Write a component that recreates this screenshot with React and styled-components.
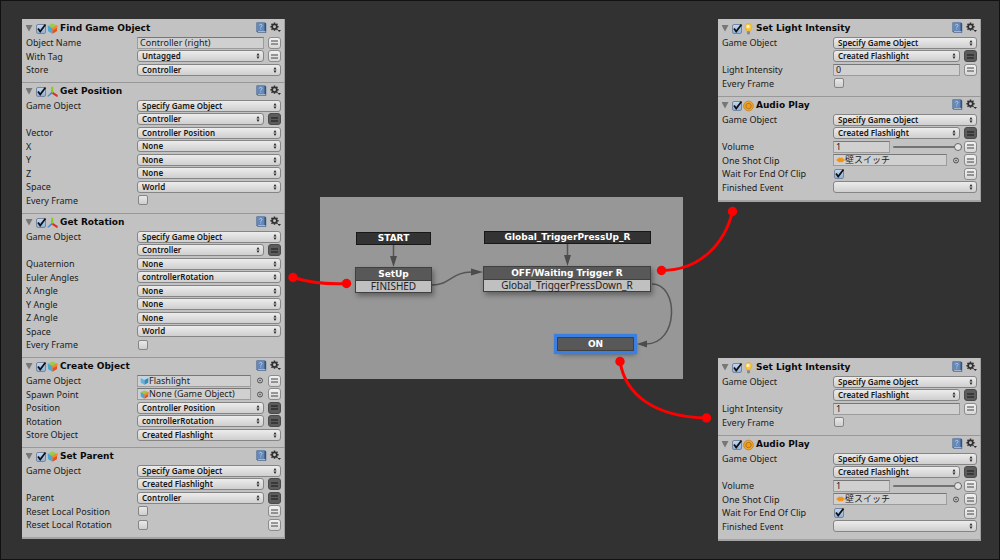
import { useId } from "react";
import styled, { createGlobalStyle } from "styled-components";

const GlobalStyle = createGlobalStyle`
  * {
    box-sizing: border-box;
  }

  body {
    margin: 0;
    background: #323232;
    color: #1c1c1c;
    font-family: "Noto Sans", "Noto Sans CJK JP", sans-serif;
    font-size: 9px;
    line-height: 12px;
  }
`;

const Page = styled.main`
  position: relative;
  display: grid;
  grid-template-columns: 263fr 363fr 263fr;
  gap: 35px;
  min-height: 100vh;
  padding: 18px 18px 18px 21px;
  border: 1px solid #111;
`;

const Column = styled.div`
  display: flex;
  flex-direction: column;
  justify-content: space-between;
  align-items: stretch;
  min-width: 0;
`;

const Panel = styled.section`
  background: #c2c2c2;
  border-bottom: 2px solid #a3a3a3;
  box-shadow: inset -1px 0 #a0a0a0;
`;

const ActionBlock = styled.article`
  padding: 0 4px 6px;

  & + & {
    box-shadow: inset 0 1px #989898, inset -1px 0 #a0a0a0;
  }
`;

const ActionHeader = styled.header`
  display: flex;
  align-items: center;
  height: 17px;
  padding: 2px 0 0;
`;

const Foldout = styled.button`
  width: 8px;
  height: 8px;
  margin: 0 2px 1px 0;
  padding: 0;
  border: 0;
  background: none;
  display: flex;
`;

const ActionTitle = styled.h2`
  flex: 1;
  margin: 0 0 0 2px;
  font-family: "DejaVu Sans", sans-serif;
  font-size: 9px;
  line-height: 13px;
  font-weight: 700;
  color: #0a0a0a;
  white-space: nowrap;
`;

const IconButton = styled.button`
  width: 11px;
  height: 11px;
  margin: 0 0 3px 3px;
  padding: 0;
  border: 0;
  background: none;
  display: flex;
`;

const HeaderIcon = styled.span`
  display: flex;
  width: 11px;
  height: 12px;
  margin-left: 1px;
`;

const RowList = styled.div`
  display: flex;
  flex-direction: column;
`;

const Row = styled.div`
  display: flex;
  align-items: center;
  gap: 4px;
  height: 13px;

  &:nth-child(even) {
    height: 14px;
  }
`;

const RowLabel = styled.label`
  flex: 0 0 107px;
  padding-top: 1px;
  white-space: nowrap;
`;

const PopupWrap = styled.span`
  position: relative;
  flex: 1;
  display: flex;
  min-width: 0;
`;

const Popup = styled.select`
  appearance: none;
  width: 100%;
  height: 12px;
  padding: 0 12px 0 4px;
  border: 1px solid #858585;
  border-radius: 3px;
  background: linear-gradient(#ececec, #cfcfcf);
  color: #161616;
  font-family: inherit;
  font-size: 8px;
  font-weight: 600;
  line-height: 10px;
`;

const PopupArrows = styled.svg`
  position: absolute;
  top: 3px;
  right: 4px;
  pointer-events: none;
`;

const FieldBox = styled.span`
  flex: ${({ $narrow }) => ($narrow ? "0 0 57px" : "1")};
  display: flex;
  align-items: center;
  min-width: 0;
  height: 12px;
  padding-left: 2px;
  background: #d0d0d0;
  border: 1px solid #9c9c9c;
  border-top-color: #777;
`;

const FieldInput = styled.input`
  flex: 1;
  min-width: 0;
  height: 10px;
  padding: 0;
  border: 0;
  outline: 0;
  background: none;
  color: inherit;
  font: inherit;
  line-height: 10px;
`;

const PickerButton = styled.button`
  width: 9px;
  height: 9px;
  padding: 0;
  border: 0;
  background: none;
  display: flex;
`;

const VariableToggle = styled.button`
  flex: 0 0 13px;
  display: flex;
  align-items: center;
  justify-content: center;
  height: 12px;
  padding: 0;
  border: 1px solid ${({ $on }) => ($on ? "#4a4a4a" : "#8c8c8c")};
  border-radius: 3px;
  background: ${({ $on }) =>
    $on ? "#5c5c5c" : "linear-gradient(#f2f2f2, #d6d6d6)"};
  color: ${({ $on }) => ($on ? "#161616" : "#444")};
`;

const Spacer = styled.span`
  flex: 1;
`;

const TickWrap = styled.span`
  position: relative;
  display: flex;
  margin-left: ${({ $inset }) => ($inset ? "1px" : "0")};
`;

const Tick = styled.input`
  appearance: none;
  width: 10px;
  height: 10px;
  margin: 0;
  border: 1px solid #858585;
  border-radius: 2px;
  background: linear-gradient(#e8e8e8, #cecece);

  &:checked {
    border-color: #7686a0;
    background: linear-gradient(#c0d6f0, #8fb2dc);
  }
`;

const TickMark = styled.svg`
  position: absolute;
  top: -1px;
  left: 0;
  pointer-events: none;
  opacity: 0;

  ${Tick}:checked + & {
    opacity: 1;
  }
`;

const Slider = styled.input`
  appearance: none;
  flex: 1;
  min-width: 0;
  height: 12px;
  margin: 0 -2px 0 -1px;
  background: none;

  &::-webkit-slider-runnable-track {
    height: 2px;
    background: #737373;
    border-radius: 1px;
  }

  &::-webkit-slider-thumb {
    appearance: none;
    width: 8px;
    height: 8px;
    margin-top: -3px;
    border: 1px solid #666;
    border-radius: 50%;
    background: #e4e4e4;
  }
`;

const Graph = styled.section`
  position: relative;
  align-self: start;
  min-height: 182px;
  margin-top: 178px;
  background: #979797;
`;

const Transitions = styled.svg`
  position: absolute;
  top: 0;
  left: 0;
  overflow: visible;
`;

const Node = styled.div`
  position: absolute;
  left: ${({ $x }) => $x}px;
  top: ${({ $y }) => $y}px;
  width: ${({ $w }) => $w}px;
  border: 1px solid ${({ $kind }) => ($kind === "event" ? "#181818" : "#404040")};
  background: ${({ $kind }) => ($kind === "event" ? "#333" : "#585858")};
  color: #fff;
  font-family: "DejaVu Sans", sans-serif;
  font-size: 9px;
  line-height: ${({ $kind }) => ($kind === "event" ? 11 : 12)}px;
  font-weight: 700;
  text-align: center;
  white-space: nowrap;
  box-shadow: ${({ $kind }) =>
    ({
      event: "none",
      state: "2px 3px 5px rgba(0, 0, 0, 0.35)",
      active: "0 0 0 2px #3b7fe0, 0 0 1px 3px #3b7fe0, 2px 4px 5px rgba(0, 0, 0, 0.35)",
    })[$kind]};
`;

const NodeEvent = styled.div`
  border-top: 1px solid #404040;
  background: #c0c0c0;
  color: #222;
  font-family: "Noto Sans", sans-serif;
  font-size: 10px;
  font-weight: 400;
  line-height: 11px;
`;

const Wires = styled.svg`
  position: absolute;
  top: -1px;
  left: -1px;
  width: calc(100% + 2px);
  height: calc(100% + 2px);
  pointer-events: none;
`;

const CubeIcon = ({ size = 11, plain }) => (
  <svg width={size} height={size} viewBox="0 0 12 12">
    <path d="M6 0.500 11.300 2.800 6 5.400 0.700 2.800Z" fill={plain ? "#a9dcf5" : "#9ccb4a"} />
    <path d="M0.700 2.800 6 5.400V11.700L1.200 9Z" fill={plain ? "#5fb4e2" : "#4ba8d0"} />
    <path d="M11.300 2.800 6 5.400V11.700L10.800 9Z" fill={plain ? "#3688bd" : "#e8501e"} />
    {!plain && <path d="M6 5.400 11.300 2.800 11 5.500 6 8Z" fill="#f58a2c" />}
  </svg>
);

const AxesIcon = () => (
  <svg width="11" height="12" viewBox="0 0 11 12">
    <path d="M4.300 0.800H6.200L6.400 7 5 7.800 4 7Z" fill="#86c826" />
    <path d="M4.300 6 5.500 7.500 1.200 10.800 0.200 10.200Z" fill="#3c8fd6" />
    <path d="M6 6 10.800 9 10.300 11.200 5 7.800Z" fill="#de2f22" />
  </svg>
);

const BulbIcon = () => (
  <svg width="11" height="12" viewBox="0 0 11 12">
    <path
      d="M5.500 0.500C3.300 0.500 2 2.100 2 4c0 1.700 1.500 2.400 1.700 4h3.600C7.500 6.400 9 5.700 9 4 9 2.100 7.700 0.500 5.500 0.500Z"
      fill="#f9c63a"
      stroke="#dba02c"
      strokeWidth="0.500"
    />
    <circle cx="5" cy="3.500" r="1.700" fill="#fff3b8" />
    <path d="M4 8.300h3v2.200L6.200 11.500H4.800L4 10.500Z" fill="#8a8a8a" />
  </svg>
);

const SpeakerIcon = () => (
  <svg width="12" height="12" viewBox="0 0 12 12">
    <circle cx="6" cy="6" r="5.300" fill="#f5a623" stroke="#b97a28" strokeWidth="0.800" />
    <circle cx="6" cy="6" r="3" fill="#f79a0c" stroke="#8f7049" strokeWidth="0.900" />
  </svg>
);

const ClipIcon = () => (
  <svg width="9" height="8" viewBox="0 0 9 8">
    <path d="M0 4 2 2.500 3 1.500 4.500 2 6 1.500 7 2.500 9 4 7 5.500 6 6.500 4.500 6 3 6.500 2 5.500Z" fill="#f39314" />
  </svg>
);

const HelpIcon = () => (
  <svg width="11" height="11" viewBox="0 0 11 11">
    <path d="M0.500 0.500h8.500l1.200 1v9.200H1.700L0.500 9.500Z" fill="#34527c" />
    <path d="M0.800 0.500h7.700v8.500H0.800Z" fill="#6489b8" />
    <path d="M1.700 9.700h7.800" stroke="#d4dae4" strokeWidth="0.900" />
    <path
      d="M3.300 3.500C3.400 2 6 2 6 3.500 6 4.400 4.700 4.500 4.700 5.700M4.700 6.600V7.500"
      fill="none"
      stroke="#bcd2ec"
      strokeWidth="0.900"
    />
  </svg>
);

const GearIcon = () => (
  <svg width="11" height="11" viewBox="0 0 11 11">
    <circle cx="4.500" cy="4.700" r="2.300" fill="none" stroke="#303030" strokeWidth="1.700" />
    <path
      d="M4.500 0.600V2.500M4.500 7V8.800M0.400 4.700H2M7 4.700H8.600M1.500 1.700 2.700 2.900M6.300 6.500 7.500 7.700M7.500 1.700 6.300 2.900M2.700 6.500 1.500 7.700"
      stroke="#303030"
      strokeWidth="1.500"
    />
    <path d="M7.500 8h3.500L9.200 10Z" fill="#2c2c2c" />
  </svg>
);

const icons = {
  cube: <CubeIcon />,
  axes: <AxesIcon />,
  bulb: <BulbIcon />,
  speaker: <SpeakerIcon />,
};

const Checkbox = ({ inset, ...props }) => (
  <TickWrap $inset={inset}>
    <Tick type="checkbox" {...props} />
    <TickMark width="11" height="11" viewBox="0 0 11 11">
      <path d="M2 5.500 4.200 8.500 9.500 1.500" fill="none" stroke="#111" strokeWidth="1.800" />
    </TickMark>
  </TickWrap>
);

const Select = ({ value, ...props }) => (
  <PopupWrap>
    <Popup defaultValue={value} {...props}>
      <option value={value}>{value}</option>
    </Popup>
    <PopupArrows width="4" height="6" viewBox="0 0 4 6" fill="#2a2a2a">
      <path d="M2 0 3.500 2.500H0.500ZM2 6 0.500 3.500H3.500Z" />
    </PopupArrows>
  </PopupWrap>
);

const objectIcons = {
  prefab: <CubeIcon size={9} plain />,
  object: <CubeIcon size={9} />,
  clip: <ClipIcon />,
};

const Property = ({ label, owner, type = "popup", value, icon, toggle }) => {
  const id = useId();
  const a11y = label ? { id } : { id, "aria-label": owner };

  return (
    <Row>
      <RowLabel htmlFor={id}>{label}</RowLabel>
      {type === "popup" && <Select value={value} {...a11y} />}
      {type === "text" && (
        <FieldBox>
          <FieldInput defaultValue={value} {...a11y} />
        </FieldBox>
      )}
      {type === "object" && (
        <>
          <FieldBox>
            {objectIcons[icon]}
            <FieldInput defaultValue={value} {...a11y} />
          </FieldBox>
          <PickerButton type="button" aria-label={`Pick ${label}`}>
            <svg width="9" height="9" viewBox="0 0 9 9">
              <circle cx="5" cy="4.500" r="2.500" fill="none" stroke="#444" strokeWidth="0.900" />
              <circle cx="5" cy="4.500" r="0.800" fill="#444" />
            </svg>
          </PickerButton>
        </>
      )}
      {type === "slider" && (
        <>
          <FieldBox $narrow>
            <FieldInput defaultValue={value} {...a11y} />
          </FieldBox>
          <Slider type="range" min="0" max="1" step="0.01" defaultValue={value} aria-label={label} />
        </>
      )}
      {type === "check" && (
        <>
          <Checkbox inset defaultChecked={value} {...a11y} />
          <Spacer />
        </>
      )}
      {toggle && (
        <VariableToggle type="button" $on={toggle === "on"} aria-label={`Use variable for ${label || owner}`}>
          <svg width="7" height="5" viewBox="0 0 7 5">
            <path d="M0 1H7M0 4H7" stroke="currentColor" />
          </svg>
        </VariableToggle>
      )}
    </Row>
  );
};

const Action = ({ title, icon, rows }) => (
  <ActionBlock>
    <ActionHeader>
      <Foldout type="button" aria-label={`Collapse ${title}`}>
        <svg width="8" height="8" viewBox="0 0 8 8">
          <path d="M-1 1H6L2.500 7.500Z" fill="#777" transform="translate(0.500 0)" />
        </svg>
      </Foldout>
      <Checkbox defaultChecked aria-label={`Enable ${title}`} />
      <HeaderIcon>{icons[icon]}</HeaderIcon>
      <ActionTitle>{title}</ActionTitle>
      <IconButton type="button" aria-label="Help">
        <HelpIcon />
      </IconButton>
      <IconButton type="button" aria-label="Settings">
        <GearIcon />
      </IconButton>
    </ActionHeader>
    <RowList>
      {rows.map((row, index) => (
        <Property key={index} {...row} />
      ))}
    </RowList>
  </ActionBlock>
);

const gameObject = (name) => [
  { label: "Game Object", value: "Specify Game Object" },
  { owner: "Specified object", value: name, toggle: "on" },
];

const setupActions = [
  {
    title: "Find Game Object",
    icon: "cube",
    rows: [
      { label: "Object Name", type: "text", value: "Controller (right)", toggle: "off" },
      { label: "With Tag", value: "Untagged", toggle: "off" },
      { label: "Store", value: "Controller" },
    ],
  },
  {
    title: "Get Position",
    icon: "axes",
    rows: [
      ...gameObject("Controller"),
      { label: "Vector", value: "Controller Position" },
      { label: "X", value: "None" },
      { label: "Y", value: "None" },
      { label: "Z", value: "None" },
      { label: "Space", value: "World" },
      { label: "Every Frame", type: "check", value: false },
    ],
  },
  {
    title: "Get Rotation",
    icon: "axes",
    rows: [
      ...gameObject("Controller"),
      { label: "Quaternion", value: "None" },
      { label: "Euler Angles", value: "controllerRotation" },
      { label: "X Angle", value: "None" },
      { label: "Y Angle", value: "None" },
      { label: "Z Angle", value: "None" },
      { label: "Space", value: "World" },
      { label: "Every Frame", type: "check", value: false },
    ],
  },
  {
    title: "Create Object",
    icon: "cube",
    rows: [
      { label: "Game Object", type: "object", icon: "prefab", value: "Flashlight", toggle: "off" },
      { label: "Spawn Point", type: "object", icon: "object", value: "None (Game Object)", toggle: "off" },
      { label: "Position", value: "Controller Position", toggle: "on" },
      { label: "Rotation", value: "controllerRotation", toggle: "on" },
      { label: "Store Object", value: "Created Flashlight" },
    ],
  },
  {
    title: "Set Parent",
    icon: "cube",
    rows: [
      ...gameObject("Created Flashlight"),
      { label: "Parent", value: "Controller", toggle: "on" },
      { label: "Reset Local Position", type: "check", value: false, toggle: "off" },
      { label: "Reset Local Rotation", type: "check", value: false, toggle: "off" },
    ],
  },
];

const lightActions = (intensity) => [
  {
    title: "Set Light Intensity",
    icon: "bulb",
    rows: [
      ...gameObject("Created Flashlight"),
      { label: "Light Intensity", type: "text", value: intensity, toggle: "off" },
      { label: "Every Frame", type: "check", value: false },
    ],
  },
  {
    title: "Audio Play",
    icon: "speaker",
    rows: [
      ...gameObject("Created Flashlight"),
      { label: "Volume", type: "slider", value: "1", toggle: "off" },
      { label: "One Shot Clip", type: "object", icon: "clip", value: "壁スイッチ", toggle: "off" },
      { label: "Wait For End Of Clip", type: "check", value: true, toggle: "off" },
      { label: "Finished Event", value: "" },
    ],
  },
];

const ActionPanel = ({ label, actions }) => (
  <Panel aria-label={label}>
    {actions.map((action) => (
      <Action key={action.title} {...action} />
    ))}
  </Panel>
);

export default function App() {
  return (
    <>
      <GlobalStyle />
      <Page>
        <Column>
          <ActionPanel label="SetUp actions" actions={setupActions} />
        </Column>

        <Graph aria-label="State graph">
          <Transitions width="363" height="182" fill="none" stroke="#555" strokeWidth="1.500">
            <path d="M73.500 47V60M247.500 46V59" />
            <path d="M112 88C131 88 131 75 152 75" />
            <path d="M332 87C359 87 359 147 326 147" />
            <g fill="#4c4c4c" stroke="none">
              <path d="M70 59H77L73.500 70ZM244 58H251L247.500 69Z" />
              <path d="M151 71.500V78.500L163 75ZM327 143.500V150.500L317 147Z" />
            </g>
          </Transitions>
          <Node $kind="event" $x={36} $y={35} $w={75}>START</Node>
          <Node $kind="state" $x={35} $y={70} $w={77}>
            SetUp
            <NodeEvent>FINISHED</NodeEvent>
          </Node>
          <Node $kind="event" $x={164} $y={34} $w={167}>Global_TriggerPressUp_R</Node>
          <Node $kind="state" $x={163} $y={69} $w={168}>
            OFF/Waiting Trigger R
            <NodeEvent>Global_TriggerPressDown_R</NodeEvent>
          </Node>
          <Node $kind="active" $x={237} $y={140} $w={77}>ON</Node>
        </Graph>

        <Column>
          <ActionPanel label="OFF actions" actions={lightActions("0")} />
          <ActionPanel label="ON actions" actions={lightActions("1")} />
        </Column>

        <Wires viewBox="0 0 1000 560" preserveAspectRatio="none" aria-hidden="true">
          <g fill="none" stroke="#f00" strokeWidth="3">
            <path d="M293 277.500Q318 285 346.500 283.500" />
            <path d="M661 270.500C700 271 725 243 732.500 211.500" />
            <path d="M620 361C625 395 655 417 706.500 418" />
          </g>
          <g fill="#f00">
            <circle cx="293" cy="277.500" r="4.700" />
            <circle cx="346.500" cy="283.500" r="4.700" />
            <circle cx="661.500" cy="270.500" r="4.700" />
            <circle cx="732.500" cy="211.500" r="4.700" />
            <circle cx="620" cy="361.500" r="4.700" />
            <circle cx="706.500" cy="418" r="4.700" />
          </g>
        </Wires>
      </Page>
    </>
  );
}
